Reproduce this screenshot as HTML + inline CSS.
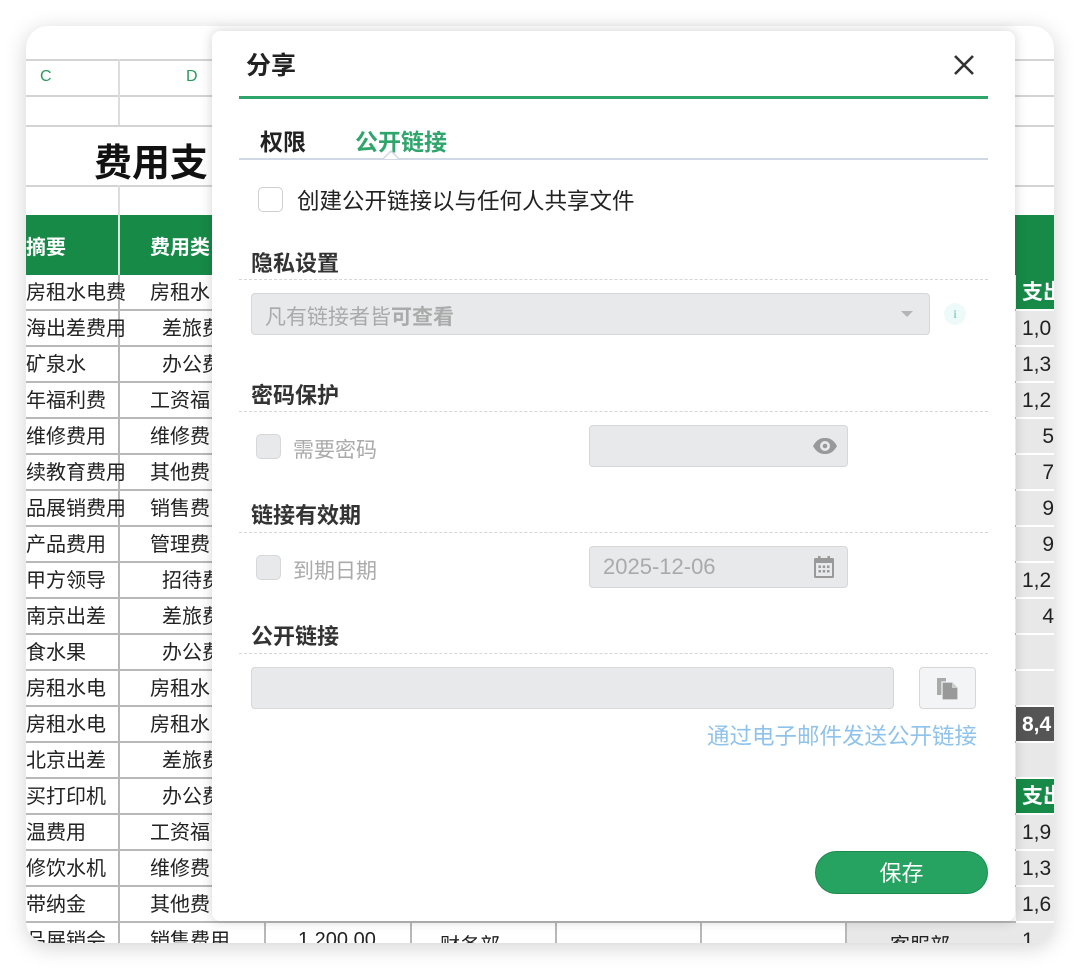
<!DOCTYPE html>
<html><head><meta charset="utf-8">
<style>
*{margin:0;padding:0;box-sizing:border-box}
body{width:1080px;height:969px;background:#fff;position:relative;overflow:hidden;font-family:"Liberation Sans","Noto Sans CJK SC",sans-serif;color:#222}
.card{position:absolute;left:26px;top:26px;width:1028px;height:917px;border-radius:22px;overflow:hidden;background:#fff;box-shadow:0 4px 22px rgba(0,0,0,.18)}
.a{position:absolute;white-space:nowrap}
.hl{position:absolute;height:2px;background:#d4d4d4}
.vl{position:absolute;width:2px;background:#b8b8b8}
.c1{position:absolute;left:0;font-size:20px;line-height:36px;white-space:nowrap}
.c2{position:absolute;font-size:20px;line-height:36px;white-space:nowrap}
.dlg{position:absolute;left:212px;top:31px;width:803px;height:890px;background:#fff;border-radius:8px;box-shadow:0 0 12px rgba(0,0,0,.18)}
.h{position:absolute;left:39px;font-size:22px;font-weight:bold;color:#333}
.dash{position:absolute;left:27px;width:749px;border-top:1.5px dashed #d6d6d6}
.inp{position:absolute;background:#e8e9eb;border:1.5px solid #d6d7d9;border-radius:4px}
.cb{position:absolute;width:25px;height:25px;border:1.5px solid #cfcfcf;border-radius:5px;background:#fff}
.cbd{background:#e8e9eb;border-color:#d6d7d9}
.gray{color:#aaa;font-size:21px}
.rs{position:absolute;left:990px;width:38px;height:36px;font-size:21px;line-height:36px;text-align:right;background:#e8e8e8;border-bottom:2px solid #fff;overflow:hidden;white-space:nowrap}
.rl{text-align:left;padding-left:6px}
</style></head><body>
<div class="card">
  <div class="hl" style="left:0;top:33px;width:1028px"></div>
  <div class="hl" style="left:0;top:69px;width:1028px"></div>
  <div class="hl" style="left:0;top:99px;width:1028px"></div>
  <div class="hl" style="left:0;top:159px;width:1028px"></div>
  <div class="vl" style="left:92px;top:33px;height:66px;background:#ddd"></div>
  <div class="vl" style="left:92px;top:159px;height:30px;background:#ddd"></div>
  <div class="a" style="left:14px;top:42px;font-size:16px;color:#2a9a5e">C</div>
  <div class="a" style="left:160px;top:42px;font-size:16px;color:#2a9a5e">D</div>
  <div class="a" style="left:68px;top:106px;font-size:38px;font-weight:bold;color:#111">费用支</div>
  <div class="a" style="left:0;top:189px;width:1028px;height:60px;background:#178a47"></div>
  <div class="vl" style="left:92px;top:189px;height:60px;background:#d9e8dd"></div>
  <div class="a" style="left:0;top:205px;font-size:20px;font-weight:bold;color:#fff">摘要</div>
  <div class="a" style="left:124px;top:205px;font-size:20px;font-weight:bold;color:#fff">费用类</div>
  <div class="a" style="left:0;top:249px;width:990px;height:670px;background:repeating-linear-gradient(to bottom,transparent 0,transparent 34px,#b8b8b8 34px,#b8b8b8 36px)"></div>
  <div class="vl" style="left:92px;top:249px;height:670px"></div>
  <div class="c1" style="top:249px">房租水电费</div><div class="c2" style="left:124px;top:249px">房租水</div>
  <div class="c1" style="top:285px">海出差费用</div><div class="c2" style="left:136px;top:285px">差旅费</div>
  <div class="c1" style="top:321px">矿泉水</div><div class="c2" style="left:136px;top:321px">办公费</div>
  <div class="c1" style="top:357px">年福利费</div><div class="c2" style="left:124px;top:357px">工资福</div>
  <div class="c1" style="top:393px">维修费用</div><div class="c2" style="left:124px;top:393px">维修费</div>
  <div class="c1" style="top:429px">续教育费用</div><div class="c2" style="left:124px;top:429px">其他费</div>
  <div class="c1" style="top:465px">品展销费用</div><div class="c2" style="left:124px;top:465px">销售费</div>
  <div class="c1" style="top:501px">产品费用</div><div class="c2" style="left:124px;top:501px">管理费</div>
  <div class="c1" style="top:537px">甲方领导</div><div class="c2" style="left:136px;top:537px">招待费</div>
  <div class="c1" style="top:573px">南京出差</div><div class="c2" style="left:136px;top:573px">差旅费</div>
  <div class="c1" style="top:609px">食水果</div><div class="c2" style="left:136px;top:609px">办公费</div>
  <div class="c1" style="top:645px">房租水电</div><div class="c2" style="left:124px;top:645px">房租水</div>
  <div class="c1" style="top:681px">房租水电</div><div class="c2" style="left:124px;top:681px">房租水</div>
  <div class="c1" style="top:717px">北京出差</div><div class="c2" style="left:136px;top:717px">差旅费</div>
  <div class="c1" style="top:753px">买打印机</div><div class="c2" style="left:136px;top:753px">办公费</div>
  <div class="c1" style="top:789px">温费用</div><div class="c2" style="left:124px;top:789px">工资福</div>
  <div class="c1" style="top:825px">修饮水机</div><div class="c2" style="left:124px;top:825px">维修费</div>
  <div class="c1" style="top:861px">带纳金</div><div class="c2" style="left:124px;top:861px">其他费</div>
  <div class="c1" style="top:897px">品展销会</div><div class="c2" style="left:124px;top:897px">销售费用</div>
  <div class="vl" style="left:238px;top:897px;height:20px"></div>
  <div class="vl" style="left:384px;top:897px;height:20px"></div>
  <div class="vl" style="left:529px;top:897px;height:20px"></div>
  <div class="vl" style="left:674px;top:897px;height:20px"></div>
  <div class="vl" style="left:819px;top:897px;height:20px"></div>
  <div class="a" style="left:272px;top:903px;font-size:20px">1,200.00</div>
  <div class="a" style="left:414px;top:903px;font-size:20px">财务部</div>
  <div class="a" style="left:821px;top:897px;width:169px;height:20px;background:#e8e8e8"></div>
  <div class="a" style="left:864px;top:903px;font-size:20px">客服部</div>
  <div class="rs rl" style="top:249px;background:#178a47;color:#fff;font-weight:bold">支出</div>
  <div class="rs rl" style="top:285px">1,0</div>
  <div class="rs rl" style="top:321px">1,3</div>
  <div class="rs rl" style="top:357px">1,2</div>
  <div class="rs" style="top:393px">5</div>
  <div class="rs" style="top:429px">7</div>
  <div class="rs" style="top:465px">9</div>
  <div class="rs" style="top:501px">9</div>
  <div class="rs rl" style="top:537px">1,2</div>
  <div class="rs" style="top:573px">4</div>
  <div class="rs" style="top:609px"></div>
  <div class="rs" style="top:645px"></div>
  <div class="rs rl" style="top:681px;background:#555;color:#fff;font-weight:bold">8,4</div>
  <div class="rs" style="top:717px"></div>
  <div class="rs rl" style="top:753px;background:#178a47;color:#fff;font-weight:bold">支出</div>
  <div class="rs rl" style="top:789px">1,9</div>
  <div class="rs rl" style="top:825px">1,3</div>
  <div class="rs rl" style="top:861px">1,6</div>
  <div class="rs rl" style="top:897px">1.</div>
</div>

<div class="dlg">
  <div class="a" style="left:34px;top:15px;font-size:25px;font-weight:bold;color:#222">分享</div>
  <svg class="a" style="left:741px;top:23px" width="22" height="22" viewBox="0 0 22 22"><path d="M2 2L20 20M20 2L2 20" stroke="#333" stroke-width="2.6"/></svg>
  <div class="a" style="left:27px;top:65px;width:749px;height:3px;background:#2ea56a"></div>
  <div class="a" style="left:48px;top:92px;font-size:23px;font-weight:bold;color:#222">权限</div>
  <div class="a" style="left:143px;top:92px;font-size:23px;font-weight:bold;color:#2ea56a">公开链接</div>
  <div class="a" style="left:27px;top:127px;width:749px;height:1.5px;background:#cfd8e3"></div>
  <svg class="a" style="left:171px;top:119px" width="16" height="10"><path d="M0 9L8 1L16 9" fill="#fff" stroke="#cfd8e3" stroke-width="1.5"/></svg>
  <div class="cb" style="left:46px;top:156px"></div>
  <div class="a" style="left:85px;top:153px;font-size:22.5px;color:#222">创建公开链接以与任何人共享文件</div>

  <div class="h" style="top:215px">隐私设置</div>
  <div class="dash" style="top:248px"></div>
  <div class="inp" style="left:39px;top:262px;width:679px;height:42px"></div>
  <div class="a gray" style="left:53px;top:270px">凡有链接者皆<b>可查看</b></div>
  <svg class="a" style="left:688px;top:279px" width="14" height="8"><path d="M1 1H13L7 7Z" fill="#b5b5b5"/></svg>
  <div class="a" style="left:732px;top:272px;width:22px;height:22px;border-radius:50%;background:#eefafa;color:#8fd3d3;font-size:12px;font-weight:bold;text-align:center;line-height:22px;font-family:'Liberation Serif',serif">i</div>

  <div class="h" style="top:347px">密码保护</div>
  <div class="dash" style="top:380px"></div>
  <div class="cb cbd" style="left:44px;top:403px"></div>
  <div class="a gray" style="left:81px;top:403px">需要密码</div>
  <div class="inp" style="left:377px;top:394px;width:259px;height:42px"></div>
  <svg class="a" style="left:600px;top:406px" width="26" height="18" viewBox="0 0 26 18"><path d="M1 9C5 2 9 1 13 1S21 2 25 9C21 16 17 17 13 17S5 16 1 9Z" fill="#999"/><circle cx="13" cy="9" r="5" fill="#e8e9eb"/><circle cx="13" cy="9" r="2.3" fill="#999"/></svg>

  <div class="h" style="top:467px">链接有效期</div>
  <div class="dash" style="top:501px"></div>
  <div class="cb cbd" style="left:44px;top:524px"></div>
  <div class="a gray" style="left:81px;top:524px">到期日期</div>
  <div class="inp" style="left:377px;top:515px;width:259px;height:42px"></div>
  <div class="a gray" style="left:391px;top:523px;font-size:22px">2025-12-06</div>
  <svg class="a" style="left:601px;top:524px" width="22" height="24" viewBox="0 0 22 24"><rect x="1" y="3" width="20" height="20" rx="1.5" fill="#999"/><rect x="3" y="8" width="16" height="13" fill="#e8e9eb"/><rect x="5" y="1" width="2.5" height="5" fill="#999"/><rect x="14.5" y="1" width="2.5" height="5" fill="#999"/><g fill="#999"><rect x="5.5" y="10.5" width="2.5" height="2.5"/><rect x="9.7" y="10.5" width="2.5" height="2.5"/><rect x="14" y="10.5" width="2.5" height="2.5"/><rect x="5.5" y="15" width="2.5" height="2.5"/><rect x="9.7" y="15" width="2.5" height="2.5"/><rect x="14" y="15" width="2.5" height="2.5"/></g></svg>

  <div class="h" style="top:588px">公开链接</div>
  <div class="dash" style="top:622px"></div>
  <div class="inp" style="left:39px;top:636px;width:643px;height:42px"></div>
  <div class="a" style="left:707px;top:636px;width:57px;height:42px;background:#f3f4f6;border:1.5px solid #d6d7d9;border-radius:4px"></div>
  <svg class="a" style="left:724px;top:646px" width="24" height="24" viewBox="0 0 24 24"><path d="M1 1H10V18H1Z" fill="#aaa"/><path d="M6 5H16L22 11V23H6Z" fill="#999" stroke="#f3f4f6" stroke-width="1.2"/><path d="M16 5V11H22" fill="#ccc"/></svg>
  <div class="a" style="left:495px;top:688px;font-size:22.5px;color:#8fc3ec">通过电子邮件发送公开链接</div>
  <div class="a" style="left:603px;top:820px;width:173px;height:43px;border-radius:22px;background:#27a361;border:1px solid #1e8a50;color:#fff;font-size:22px;text-align:center;line-height:43px">保存</div>
</div>
</body></html>
